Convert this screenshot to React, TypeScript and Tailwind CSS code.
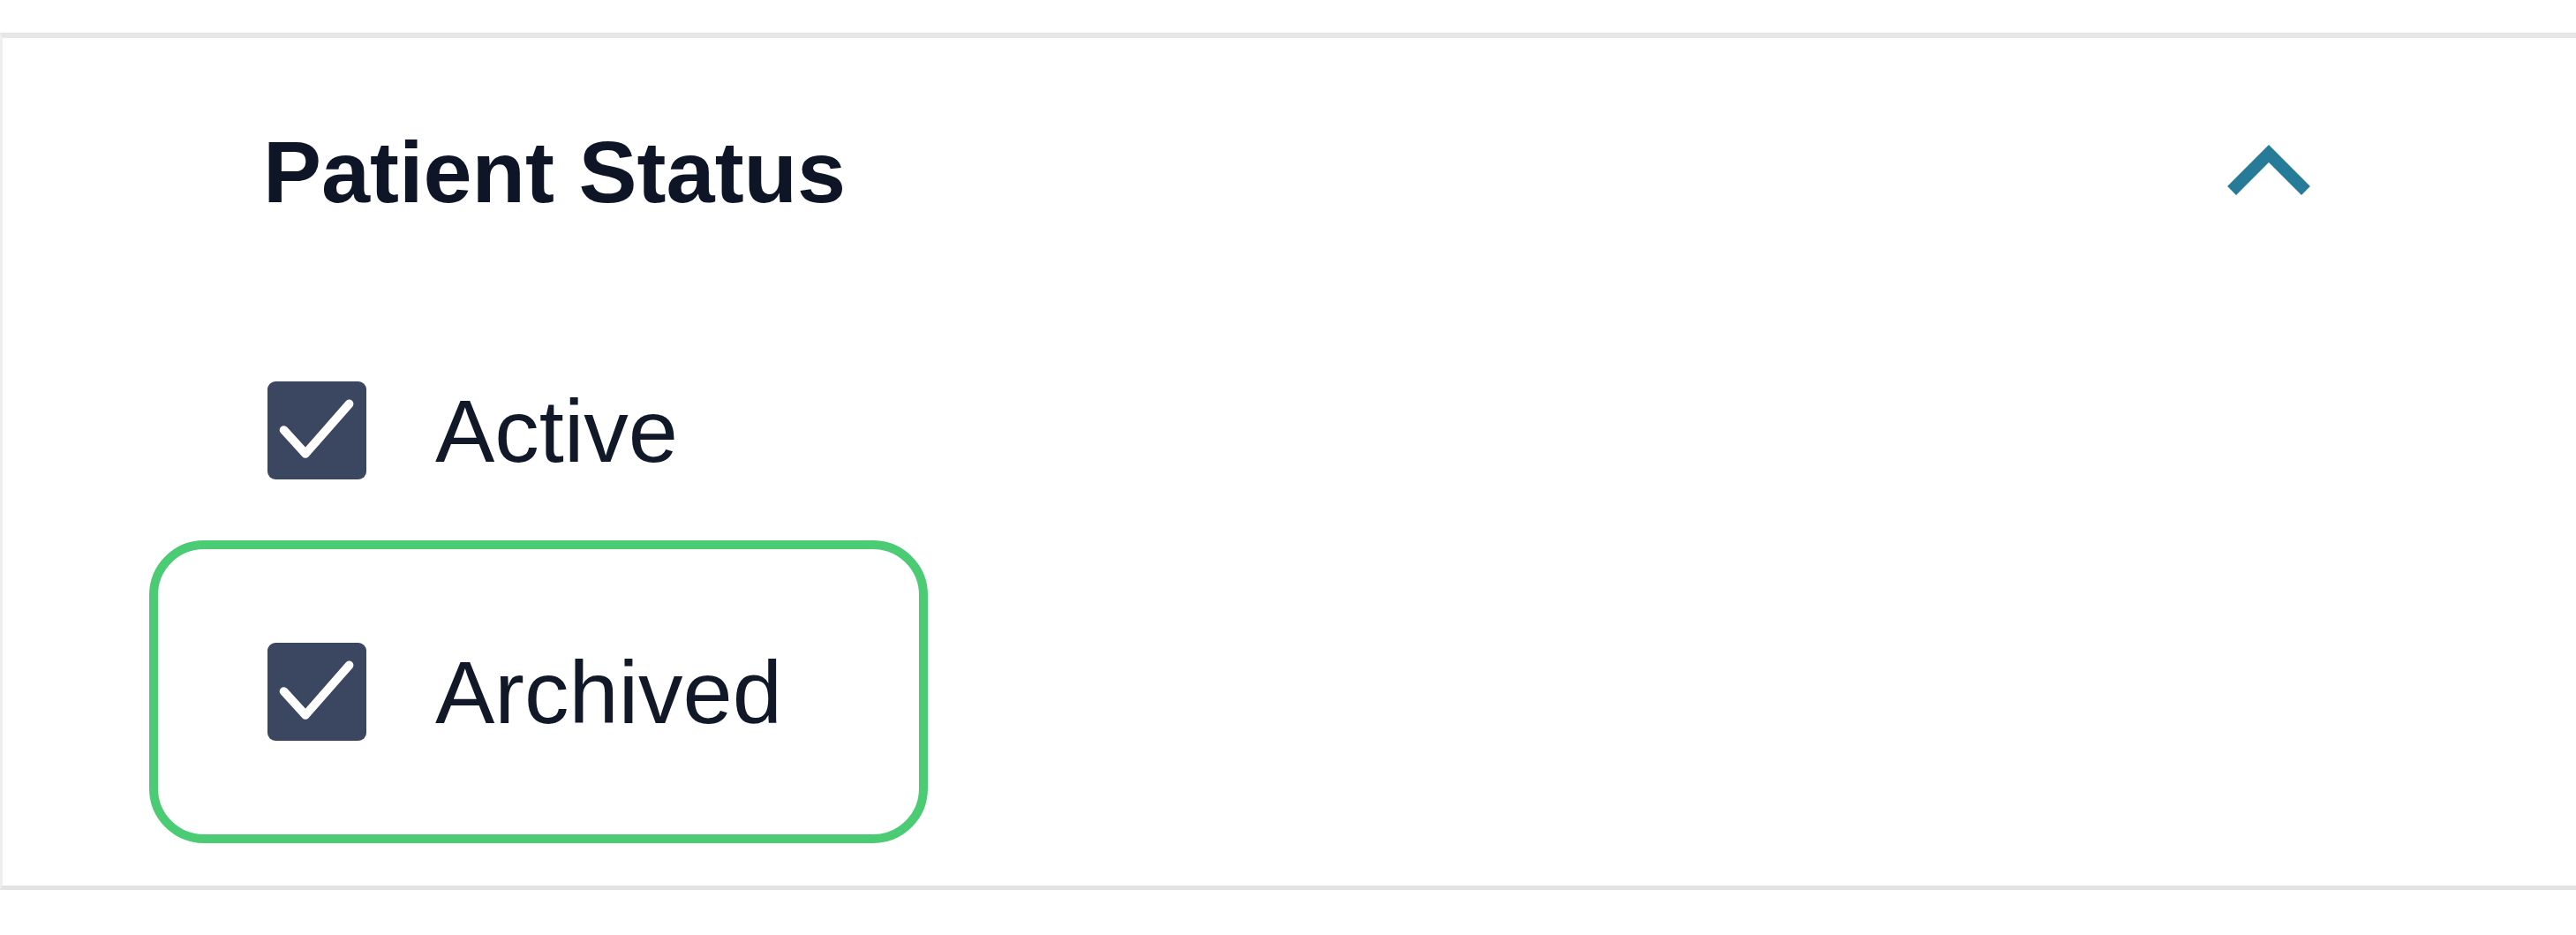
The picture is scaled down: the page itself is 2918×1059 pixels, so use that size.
import React, { useState } from "react";

type Option = { id: string; label: string; highlight?: boolean };

const OPTIONS: Option[] = [
  { id: "active", label: "Active" },
  { id: "archived", label: "Archived", highlight: true },
];

function CheckBox({ checked }: { checked: boolean }) {
  return (
    <span
      className={`flex h-[111px] w-[112px] shrink-0 items-center justify-center rounded-[9px] ${
        checked ? "bg-[#3b4661]" : "border-4 border-[#3b4661] bg-white"
      }`}
    >
      {checked && (
        <svg width="112" height="111" viewBox="0 0 24 24" fill="none">
          <path
            d="M3.9 11.9 L9.2 17.7 L19.9 5.5"
            stroke="#ffffff"
            strokeWidth="2.1"
            strokeLinecap="round"
            strokeLinejoin="round"
          />
        </svg>
      )}
    </span>
  );
}

export default function App() {
  const [open, setOpen] = useState(true);
  const [checked, setChecked] = useState<Record<string, boolean>>({
    active: true,
    archived: true,
  });

  return (
    <div
      className="h-[1059px] w-full bg-white pt-[37px]"
      style={{ fontFamily: '"Liberation Sans", Arial, sans-serif' }}
    >
      {/* Filter panel */}
      <div className="h-[971px] border-t-[6px] border-b-[5px] border-l-[3px] border-t-[#e6e6e6] border-b-[#e2e2e2] border-l-[#eeeeee] pl-[166px] pr-[298px] pt-[102px]">
        {/* Header */}
        <div className="ml-[129px] flex h-[100px] items-center justify-between">
          <h2 className="text-[99px] font-bold leading-[100px] text-[#0e1526]">
            Patient Status
          </h2>
          <button onClick={() => setOpen(!open)} className="flex h-[80px] w-[100px] items-start">
            <svg width="100" height="80" viewBox="0 0 100 80" fill="none">
              <path
                d={open ? "M13 56 L50 19 L87 56" : "M13 24 L50 61 L87 24"}
                stroke="#267c98"
                strokeWidth="14"
                strokeLinecap="square"
              />
            </svg>
          </button>
        </div>

        {open && (
          <div className="mt-[187px] flex flex-col gap-[69px]">
            {OPTIONS.map((opt) => {
              const row = (
                <label
                  key={opt.id}
                  className="flex cursor-pointer items-center gap-[78px]"
                  onClick={() => setChecked({ ...checked, [opt.id]: !checked[opt.id] })}
                >
                  <CheckBox checked={checked[opt.id]} />
                  <span className="text-[101px] leading-[100px] text-[#111827]">
                    {opt.label}
                  </span>
                </label>
              );
              return opt.highlight ? (
                <div
                  key={opt.id}
                  className="flex h-[343px] w-[882px] items-center rounded-[62px] border-[10px] border-[#4bcb74] pl-[124px]"
                >
                  {row}
                </div>
              ) : (
                <div key={opt.id} className="ml-[134px]">
                  {row}
                </div>
              );
            })}
          </div>
        )}
      </div>
    </div>
  );
}
